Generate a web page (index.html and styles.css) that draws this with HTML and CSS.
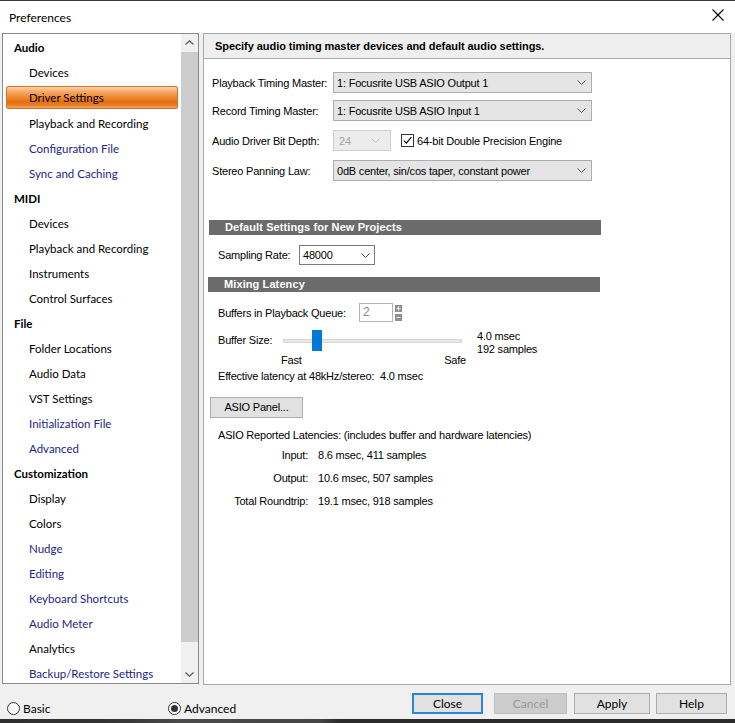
FILE: index.html
```html
<!DOCTYPE html>
<html>
<head>
<meta charset="utf-8">
<title>Preferences</title>
<link rel="stylesheet" href="styles.css">
</head>
<body>
<div class="window">
  <div class="titlebar">
    <span class="title">Preferences</span>
    <svg class="close-x" viewBox="0 0 12 12"><path d="M0.5 0.5 L11.5 11.5 M11.5 0.5 L0.5 11.5" stroke="#000" stroke-width="1.1" fill="none"/></svg>
  </div>

  <div class="main">
    <div class="sidebar">
      <ul class="tree">
        <li class="cat">Audio</li>
        <li class="item">Devices</li>
        <li class="item sel"><span>Driver Settings</span></li>
        <li class="item">Playback and Recording</li>
        <li class="item link">Configuration File</li>
        <li class="item link">Sync and Caching</li>
        <li class="cat">MIDI</li>
        <li class="item">Devices</li>
        <li class="item">Playback and Recording</li>
        <li class="item">Instruments</li>
        <li class="item">Control Surfaces</li>
        <li class="cat">File</li>
        <li class="item">Folder Locations</li>
        <li class="item">Audio Data</li>
        <li class="item">VST Settings</li>
        <li class="item link">Initialization File</li>
        <li class="item link">Advanced</li>
        <li class="cat">Customization</li>
        <li class="item">Display</li>
        <li class="item">Colors</li>
        <li class="item link">Nudge</li>
        <li class="item link">Editing</li>
        <li class="item link">Keyboard Shortcuts</li>
        <li class="item link">Audio Meter</li>
        <li class="item">Analytics</li>
        <li class="item link">Backup/Restore Settings</li>
      </ul>
      <div class="vscroll">
        <div class="sb-btn"><svg viewBox="0 0 9 5"><path d="M0.5 4.5 L4.5 0.8 L8.5 4.5" fill="none" stroke="#606060" stroke-width="1.3"/></svg></div>
        <div class="sb-track"><div class="sb-thumb"></div></div>
        <div class="sb-btn"><svg viewBox="0 0 9 5"><path d="M0.5 0.5 L4.5 4.2 L8.5 0.5" fill="none" stroke="#606060" stroke-width="1.3"/></svg></div>
      </div>
    </div>

    <div class="panel">
      <div class="panel-head">Specify audio timing master devices and default audio settings.</div>
      <div class="panel-body">
        <div class="frow r1">
          <span class="lbl w121">Playback Timing Master:</span>
          <div class="select w259"><span>1: Focusrite USB ASIO Output 1</span><svg class="chev" viewBox="0 0 9 5"><path d="M0.5 0.5 L4.5 4.5 L8.5 0.5" fill="none" stroke="#555" stroke-width="1"/></svg></div>
        </div>
        <div class="frow r2">
          <span class="lbl w121">Record Timing Master:</span>
          <div class="select w259"><span>1: Focusrite USB ASIO Input 1</span><svg class="chev" viewBox="0 0 9 5"><path d="M0.5 0.5 L4.5 4.5 L8.5 0.5" fill="none" stroke="#555" stroke-width="1"/></svg></div>
        </div>
        <div class="frow r3">
          <span class="lbl w121">Audio Driver Bit Depth:</span>
          <div class="select disabled w58"><span>24</span><svg class="chev" viewBox="0 0 9 5"><path d="M0.5 0.5 L4.5 4.5 L8.5 0.5" fill="none" stroke="#c4c4c4" stroke-width="1"/></svg></div>
          <span class="checkbox"><svg viewBox="0 0 11 11"><path d="M1.8 5.6 L4.3 8.2 L9.4 2.2" fill="none" stroke="#000" stroke-width="1.2"/></svg></span>
          <span class="cb-label">64-bit Double Precision Engine</span>
        </div>
        <div class="frow r3">
          <span class="lbl w121">Stereo Panning Law:</span>
          <div class="select w259"><span>0dB center, sin/cos taper, constant power</span><svg class="chev" viewBox="0 0 9 5"><path d="M0.5 0.5 L4.5 4.5 L8.5 0.5" fill="none" stroke="#555" stroke-width="1"/></svg></div>
        </div>

        <div class="section s1">Default Settings for New Projects</div>
        <div class="frow r-sr">
          <span class="lbl w81 ind">Sampling Rate:</span>
          <div class="select white w76"><span>48000</span><svg class="chev" viewBox="0 0 9 5"><path d="M0.5 0.5 L4.5 4.5 L8.5 0.5" fill="none" stroke="#444" stroke-width="1"/></svg></div>
        </div>

        <div class="section s2">Mixing Latency</div>
        <div class="frow r-bq">
          <span class="lbl w141 ind">Buffers in Playback Queue:</span>
          <div class="numbox">2</div>
          <svg class="spinner" viewBox="0 0 9 18"><rect x="1" y="1" width="7" height="7" fill="#8e8e8e"/><rect x="1" y="10" width="7" height="7" fill="#8e8e8e"/><path d="M4.5 2.3 V6.7 M2.3 4.5 H6.7 M2.3 13.5 H6.7" stroke="#e8e8e8" stroke-width="1.2"/></svg>
        </div>
        <div class="bufrow">
          <span class="lbl w65 ind bs-lbl">Buffer Size:</span>
          <div class="slider"><div class="track"></div><div class="thumb"></div></div>
          <div class="readout"><div>4.0 msec</div><div>192 samples</div></div>
        </div>
        <div class="ticks"><span>Fast</span><span>Safe</span></div>
        <div class="line ind eff">Effective latency at 48kHz/stereo:&nbsp; 4.0 msec</div>
        <div class="btn asio">ASIO Panel...</div>
        <div class="line ind rep">ASIO Reported Latencies: (includes buffer and hardware latencies)</div>
        <div class="lat first"><span class="lat-l">Input:</span><span>8.6 msec, 411 samples</span></div>
        <div class="lat"><span class="lat-l">Output:</span><span>10.6 msec, 507 samples</span></div>
        <div class="lat"><span class="lat-l">Total Roundtrip:</span><span>19.1 msec, 918 samples</span></div>
      </div>
    </div>
  </div>

  <div class="footer">
    <div class="radio-wrap basic"><span class="radio"></span><span>Basic</span></div>
    <div class="radio-wrap"><span class="radio on"></span><span>Advanced</span></div>
    <div class="buttons">
      <div class="fbtn default b-close">Close</div>
      <div class="fbtn off b-cancel">Cancel</div>
      <div class="fbtn b-apply">Apply</div>
      <div class="fbtn b-help">Help</div>
    </div>
  </div>
  <div class="taskbar"></div>
</div>
</body>
</html>
```

FILE: styles.css
```css
* { box-sizing: border-box; }
html, body { margin: 0; padding: 0; }
body {
  width: 735px;
  height: 723px;
  overflow: hidden;
  background: #f0f0f0;
  font-family: Lato, "Noto Sans", sans-serif;
  color: #000;
}
.window {
  width: 735px;
  height: 723px;
  display: flex;
  flex-direction: column;
  background: #f0f0f0;
}

/* title bar */
.titlebar {
  height: 33px;
  flex: none;
  background: #fff;
  border-top: 1px solid #3a3a3a;
  display: flex;
  align-items: center;
  padding-left: 9px;
}
.title { flex: 1; font-size: 12px; }
.close-x {
  width: 12px;
  height: 12px;
  margin-right: 11px;
  align-self: flex-start;
  margin-top: 8px;
}

/* main area */
.main {
  height: 652px;
  flex: none;
  display: flex;
  padding-left: 2px;
  gap: 4px;
}

/* sidebar */
.sidebar {
  width: 197px;
  height: 651px;
  border: 1px solid #8a8a8a;
  background: #fff;
  display: flex;
}
.tree {
  list-style: none;
  margin: 0;
  padding: 1px 0 0;
  width: 178px;
  font-size: 11.5px;
}
.tree li {
  height: 25px;
  line-height: 25px;
  white-space: nowrap;
}
.cat { padding-left: 11px; font-weight: bold; }
.item { padding-left: 26px; }
.item.link { color: #24248a; }
.item.sel { padding-left: 3px; }
.item.sel span {
  display: block;
  width: 172px;
  height: 23px;
  line-height: 21px;
  margin-top: 1px;
  padding-left: 22px;
  border: 1px solid #cf7429;
  border-radius: 2px;
  background: linear-gradient(to bottom, #fbd0a6 0%, #f6aa6a 22%, #ef8d3a 45%, #e5700f 70%, #e87a20 84%, #f3a261 100%);
}
.vscroll {
  width: 17px;
  display: flex;
  flex-direction: column;
  background: #f0f0f0;
}
.sb-btn {
  height: 17px;
  flex: none;
  display: flex;
  align-items: center;
  justify-content: center;
}
.sb-btn svg { width: 9px; height: 5px; }
.sb-track { flex: 1; }
.sb-thumb {
  margin-top: 1px;
  height: 590px;
  background: #cdcdcd;
}

/* right panel */
.panel {
  width: 528px;
  height: 652px;
  border: 1px solid #a9a9a9;
  background: #fff;
  font-family: "Liberation Sans", Arial, sans-serif;
  font-size: 11px;
  letter-spacing: -0.2px;
}
.panel-head {
  height: 25px;
  background: #efefef;
  border-bottom: 1px solid #a9a9a9;
  padding-left: 11px;
  line-height: 24px;
  font-weight: bold;
  letter-spacing: -0.05px;
}
.panel-body { padding-left: 8px; }
.frow {
  display: flex;
  align-items: center;
  height: 21px;
}
.r1 { margin-top: 13px; }
.r2 { margin-top: 7px; }
.r3 { margin-top: 9px; }
.lbl { flex: none; white-space: nowrap; }
.w121 { width: 121px; }
.w81 { width: 81px; }
.w141 { width: 141px; }
.w65 { width: 65px; }
.ind { margin-left: 6px; }

.select {
  flex: none;
  height: 21px;
  display: flex;
  align-items: center;
  justify-content: space-between;
  border: 1px solid #adadad;
  background: #e5e5e5;
  padding: 0 5px 0 3px;
  white-space: nowrap;
}
.w259 { width: 259px; }
.w58 { width: 58px; }
.w76 { width: 76px; height: 20px; }
.chev { width: 9px; height: 5px; flex: none; }
.select.disabled {
  background: #ececec;
  border-color: #cfcfcf;
  color: #a3a3a3;
  padding: 0 10px 0 5px;
}
.select.white {
  background: #fff;
  border-color: #7a7a7a;
  padding: 0 4px 0 3px;
}
.checkbox {
  width: 13px;
  height: 13px;
  margin-left: 10px;
  border: 1px solid #333;
  background: #fff;
  display: flex;
}
.checkbox svg { width: 11px; height: 11px; }
.cb-label { margin-left: 3px; white-space: nowrap; }

.section {
  margin-left: -3px;
  width: 392px;
  height: 15px;
  line-height: 15px;
  background: #6b6b6b;
  color: #fff;
  font-weight: bold;
  padding-left: 16px;
  letter-spacing: 0.1px;
}
.s1 { margin-top: 39px; }
.s2 { margin-top: 12px; margin-left: -4px; padding-left: 16px; }
.r-sr { margin-top: 10px; height: 20px; }
.r-bq { margin-top: 11px; height: 19px; }
.numbox {
  width: 34px;
  height: 19px;
  border: 1px solid #b4b4b4;
  background: #fff;
  color: #8a8a8a;
  padding-left: 3px;
  line-height: 17px;
  font-size: 12px;
}
.spinner { width: 9px; height: 18px; margin-left: 1px; }

.bufrow {
  margin-top: 8px;
  height: 24px;
  display: flex;
  align-items: flex-start;
}
.bs-lbl { line-height: 21px; }
.slider {
  position: relative;
  width: 179px;
  height: 21px;
  flex: none;
}
.track {
  position: absolute;
  left: 0;
  right: 0;
  top: 9px;
  height: 4px;
  background: #e7e7e7;
  border: 1px solid #d6d6d6;
}
.thumb {
  position: absolute;
  left: 29px;
  top: 0;
  width: 10px;
  height: 21px;
  background: #0078d7;
}
.readout { margin-left: 15px; line-height: 13px; }
.ticks {
  margin-left: 69px;
  width: 185px;
  display: flex;
  justify-content: space-between;
  line-height: 13px;
}
.line { line-height: 13px; white-space: nowrap; }
.eff { margin-top: 3px; }
.btn {
  margin-top: 14px;
  margin-left: -2px;
  width: 93px;
  height: 21px;
  border: 1px solid #adadad;
  background: #e1e1e1;
  text-align: center;
  line-height: 19px;
}
.rep { margin-top: 11px; }
.lat {
  display: flex;
  line-height: 13px;
  margin-top: 10px;
  white-space: nowrap;
}
.lat.first { margin-top: 7px; }
.lat-l { width: 96px; text-align: right; margin-right: 10px; }

/* footer */
.footer {
  height: 34px;
  flex: none;
  display: flex;
  align-items: flex-start;
  font-size: 12px;
}
.radio-wrap {
  display: flex;
  align-items: center;
  margin-top: 17px;
  height: 13px;
  gap: 3px;
}
.radio-wrap.basic { margin-left: 7px; width: 161px; }
.radio {
  width: 13px;
  height: 13px;
  border: 1px solid #333;
  border-radius: 50%;
  background: #fff;
  display: flex;
  align-items: center;
  justify-content: center;
}
.radio.on::after {
  content: "";
  width: 7px;
  height: 7px;
  border-radius: 50%;
  background: #333;
}
.buttons {
  margin-left: auto;
  margin-right: 8px;
  margin-top: 8px;
  display: flex;
}
.fbtn {
  height: 21px;
  border: 1px solid #adadad;
  background: #e1e1e1;
  text-align: center;
  line-height: 19px;
}
.fbtn.default { border: 2px solid #2c84d8; line-height: 17px; }
.fbtn.off { background: #cccccc; border-color: #bfbfbf; color: #9b9b9b; }
.b-close { width: 71px; }
.b-cancel { width: 73px; margin-left: 11px; }
.b-apply { width: 76px; margin-left: 7px; }
.b-help { width: 71px; margin-left: 6px; }

.taskbar {
  flex: 1;
  background: linear-gradient(to right, #2e2e2e 0, #333 110px, #4a4a4a 180px, #444 320px, #2b2b2b 340px, #2b2b2b 100%);
}
```
